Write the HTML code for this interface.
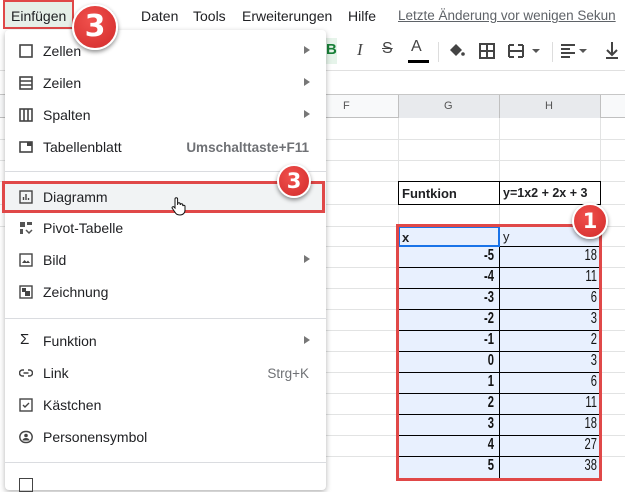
<!DOCTYPE html>
<html><head><meta charset="utf-8"><style>
*{margin:0;padding:0;box-sizing:border-box}
body{width:625px;height:481px;overflow:hidden;background:#fff;font-family:"Liberation Sans",Arial,sans-serif;position:relative;color:#202124}
.abs{position:absolute}
.menubar span{position:absolute;top:8px;font-size:14px;color:#202124}
.hl{position:absolute;height:1px;background:#e2e3e3}
.vl{position:absolute;width:1px;background:#e2e3e3}
.cell{position:absolute;font-size:16px;font-weight:bold;transform:scaleX(.7);transform-origin:right center;color:#111}
.menu{position:absolute;left:5px;top:30px;width:321px;height:460px;background:#fff;box-shadow:0 2px 6px rgba(0,0,0,.3);border-radius:4px}
.it{position:absolute;left:0;width:321px;height:32px;font-size:14px}
.it .t{position:absolute;left:38px;top:8px}
.it .ic{position:absolute;left:14px;top:9px;width:14px;height:14px}
.it .ar{position:absolute;right:16px;top:11px;width:0;height:0;border-left:6px solid #777;border-top:4px solid transparent;border-bottom:4px solid transparent}
.it .sc{position:absolute;right:17px;top:9px;color:#6f7175;font-weight:bold;font-size:13.5px}
.sep{position:absolute;left:0;width:321px;height:1px;background:#dadce0}
.badge{position:absolute;border-radius:50%;background:radial-gradient(circle at 40% 35%,#f0504c,#d22b2b);border:2px solid #fff;box-shadow:0 2px 4px rgba(0,0,0,.45);color:#fff;font-weight:bold;text-align:center;font-family:"DejaVu Sans",sans-serif}
</style></head><body>
<div class="abs" style="left:3px;top:0;width:71px;height:29px;border:2px solid #e04848;background:#e6efe8"></div>
<div class="menubar">
<span style="left:11px">Einfügen</span>
<span style="left:110px">t</span>
<span style="left:141px">Daten</span>
<span style="left:193px">Tools</span>
<span style="left:242px">Erweiterungen</span>
<span style="left:348px">Hilfe</span>
<span style="left:398px;color:#5f6368;text-decoration:underline;font-size:13.5px">Letzte Änderung vor wenigen Sekun</span>
</div>
<div class="abs" style="left:0;top:32px;width:625px;height:39px;background:#fff;border-bottom:1px solid #e0e0e0"></div>
<div class="abs" style="left:326px;top:38px;width:11px;height:26px;background:#e6f4ea"></div>
<div class="abs" style="left:326px;top:41px;font-weight:bold;color:#188038;font-size:15px">B</div>
<div class="abs" style="left:357px;top:40px;font-style:italic;font-family:'Liberation Serif';font-size:17px;color:#444">I</div>
<div class="abs" style="left:382px;top:40px;text-decoration:line-through;font-size:16px;color:#444">S</div>
<div class="abs" style="left:411px;top:38px;font-size:16px;color:#444">A</div>
<div class="abs" style="left:408px;top:60px;width:21px;height:3px;background:#000"></div>
<div class="abs" style="left:438px;top:42px;width:1px;height:20px;background:#ddd"></div>
<svg class="abs" style="left:448px;top:42px" width="18" height="18"><path d="M2 8l6-6 6 6-6 6z" fill="#444"/><circle cx="15" cy="12" r="1.8" fill="#444"/></svg>
<svg class="abs" style="left:479px;top:43px" width="16" height="16"><rect x="1" y="1" width="14" height="14" fill="none" stroke="#444" stroke-width="2"/><path d="M8 1V15M1 8H15" stroke="#444" stroke-width="2"/></svg>
<svg class="abs" style="left:508px;top:43px" width="40" height="16"><path d="M1 2h5M10 2h5M1 14h5M10 14h5M1 8h14M1 2v12M15 2v12" stroke="#444" stroke-width="2" fill="none"/><path d="M24 6l4 4 4-4z" fill="#555"/></svg>
<div class="abs" style="left:552px;top:42px;width:1px;height:20px;background:#ddd"></div>
<svg class="abs" style="left:561px;top:44px" width="40" height="14"><path d="M0 1h14M0 5h9M0 9h14M0 13h9" stroke="#444" stroke-width="2"/><path d="M18 5l4 4 4-4z" fill="#555"/></svg>
<svg class="abs" style="left:606px;top:42px" width="14" height="18"><path d="M6 0v12M1 8l5 5 5-5M0 16h12" stroke="#444" stroke-width="2" fill="none"/></svg>
<div class="hl" style="left:0;top:94px;width:625px;background:#c7c7c7"></div>
<div class="abs" style="left:0;top:95px;width:625px;height:23px;background:#f8f9fa;border-bottom:1px solid #c0c0c0"></div>
<div class="abs" style="left:398px;top:95px;width:202px;height:23px;background:#e8eaed"></div>
<div class="abs" style="left:343px;top:100px;font-size:11px;color:#555">F</div>
<div class="abs" style="left:444px;top:100px;font-size:11px;color:#555">G</div>
<div class="abs" style="left:545px;top:100px;font-size:11px;color:#555">H</div>
<div class="vl" style="left:398px;top:95px;height:23px;background:#c0c0c0"></div>
<div class="vl" style="left:499px;top:95px;height:23px;background:#c0c0c0"></div>
<div class="vl" style="left:600px;top:95px;height:23px;background:#c0c0c0"></div>
<div class="vl" style="left:398px;top:118px;height:363px"></div>
<div class="vl" style="left:499px;top:118px;height:363px"></div>
<div class="vl" style="left:600px;top:118px;height:363px"></div>
<div class="hl" style="left:0;top:139px;width:625px"></div>
<div class="hl" style="left:0;top:160px;width:625px"></div>
<div class="hl" style="left:0;top:181px;width:625px"></div>
<div class="hl" style="left:0;top:204px;width:625px"></div>
<div class="hl" style="left:0;top:226px;width:625px"></div>
<div id="g"></div>
<div class="abs" style="left:398px;top:181px;width:203px;height:24px;border:1px solid #000"></div>
<div class="vl" style="left:499px;top:181px;height:24px;background:#000"></div>
<div class="abs" style="left:402px;top:186px;font-size:13px;font-weight:bold">Funtkion</div>
<div class="abs" style="left:503px;top:186px;font-size:12.5px;font-weight:bold">y=1x2 + 2x + 3</div>
<div class="abs" style="left:398px;top:226px;width:202px;height:252px;background:#e8f0fe"></div>
<div id="rows"></div>
<div class="abs" style="left:398px;top:226px;width:102px;height:21px;border:2px solid #1a73e8"></div>
<div class="abs" style="left:402px;top:230px;font-size:13px;font-weight:bold">x</div>
<div class="abs" style="left:503px;top:229px;font-size:13px">y</div>
<div class="abs" style="left:396px;top:224px;width:206px;height:257px;border:3px solid #e04848"></div>
<div class="menu">
<div class="it" style="top:5px"><svg class="ic" viewBox="0 0 14 14"><rect x="1" y="1" width="12" height="12" fill="none" stroke="#444" stroke-width="1.6"/></svg><span class="t">Zellen</span><i class="ar"></i></div>
<div class="it" style="top:37px"><svg class="ic" viewBox="0 0 14 14"><rect x="1" y="1" width="12" height="12" fill="none" stroke="#444" stroke-width="1.6"/><path d="M1 5h12M1 9h12" stroke="#444" stroke-width="1.6"/></svg><span class="t">Zeilen</span><i class="ar"></i></div>
<div class="it" style="top:69px"><svg class="ic" viewBox="0 0 14 14"><rect x="1" y="1" width="12" height="12" fill="none" stroke="#444" stroke-width="1.6"/><path d="M5 1v12M9 1v12" stroke="#444" stroke-width="1.6"/></svg><span class="t">Spalten</span><i class="ar"></i></div>
<div class="it" style="top:101px"><svg class="ic" viewBox="0 0 14 14"><rect x="1" y="2" width="12" height="10" fill="none" stroke="#444" stroke-width="1.6"/><rect x="8" y="2" width="5" height="4" fill="#444"/></svg><span class="t">Tabellenblatt</span><span class="sc">Umschalttaste+F11</span></div>
<div class="sep" style="top:141px"></div>
<div class="it" style="top:151px;background:#f1f3f4"><svg class="ic" viewBox="0 0 14 14"><rect x="1" y="1" width="12" height="12" fill="none" stroke="#444" stroke-width="1.4"/><path d="M4.5 10V7M7 10V4M9.5 10V8" stroke="#444" stroke-width="1.4"/></svg><span class="t">Diagramm</span></div>
<div class="it" style="top:182px"><svg class="ic" viewBox="0 0 14 14"><path d="M1 1h5v5H1zM8 1h5v3H8zM1 8h3v5H1z" fill="#555"/><path d="M7 9l3 3 3-3" stroke="#555" stroke-width="1.5" fill="none"/></svg><span class="t">Pivot-Tabelle</span></div>
<div class="it" style="top:214px"><svg class="ic" viewBox="0 0 14 14"><rect x="1" y="1" width="12" height="12" fill="none" stroke="#444" stroke-width="1.4"/><path d="M3 10l2.5-3 2 2 1.5-1.5L11 10z" fill="#444"/></svg><span class="t">Bild</span><i class="ar"></i></div>
<div class="it" style="top:246px"><svg class="ic" viewBox="0 0 14 14"><rect x="1" y="1" width="12" height="12" fill="none" stroke="#444" stroke-width="1.4"/><rect x="3" y="3" width="4" height="4" fill="#444"/><rect x="6" y="6" width="5" height="5" fill="#444"/></svg><span class="t">Zeichnung</span></div>
<div class="sep" style="top:288px"></div>
<div class="it" style="top:295px"><span class="ic" style="font-size:15px;top:6px;left:15px">Σ</span><span class="t">Funktion</span><i class="ar"></i></div>
<div class="it" style="top:327px"><svg class="ic" viewBox="0 0 14 14"><path d="M5 4H3.5a3 3 0 000 6H5M9 4h1.5a3 3 0 010 6H9M4.5 7h5" stroke="#444" stroke-width="1.5" fill="none"/></svg><span class="t">Link</span><span class="sc" style="font-weight:normal">Strg+K</span></div>
<div class="it" style="top:359px"><svg class="ic" viewBox="0 0 14 14"><rect x="1" y="1" width="12" height="12" fill="none" stroke="#444" stroke-width="1.4"/><path d="M4 7l2 2 4-4" stroke="#444" stroke-width="1.4" fill="none"/></svg><span class="t">Kästchen</span></div>
<div class="it" style="top:391px"><svg class="ic" viewBox="0 0 14 14"><rect x="0.8" y="1.5" width="12.4" height="11" rx="5.5" fill="none" stroke="#444" stroke-width="1.4"/><circle cx="7" cy="5.5" r="1.8" fill="#444"/><path d="M3.5 10.5a3.5 2.5 0 017 0z" fill="#444"/></svg><span class="t">Personensymbol</span></div>
<div class="sep" style="top:432px"></div>
<div class="abs" style="left:14px;top:448px;width:14px;height:14px;border:1.5px solid #444"></div>
</div>
<div class="abs" style="left:2px;top:181px;width:323px;height:32px;border:3px solid #e04848"></div>
<svg class="abs" style="left:170px;top:196px" width="16" height="20"><path d="M5 12V3a1.3 1.3 0 012.6 0v6 -1a1.3 1.3 0 012.6 0v1a1.3 1.3 0 012.6 0v1a1.2 1.2 0 012.2 0v4c0 3-2 5-5 5s-4-1-5.5-3.5L2 12a1.2 1.2 0 012-1z" fill="#fff" stroke="#111" stroke-width="1"/></svg>
<div class="badge" style="left:72px;top:4px;width:46px;height:46px;font-size:30px;line-height:42px">3</div>
<div class="badge" style="left:277px;top:164px;width:34px;height:34px;font-size:21px;line-height:30px">3</div>
<div class="badge" style="left:572px;top:203px;width:36px;height:36px;font-size:21px;line-height:32px">1</div>
<script>
var xs=[-5,-4,-3,-2,-1,0,1,2,3,4,5],h='',g='';
for(var i=0;i<11;i++){var t=246+i*21;
g+='<div class="hl" style="left:326px;top:'+t+'px;width:72px"></div><div class="hl" style="left:600px;top:'+t+'px;width:25px"></div>';
h+='<div class="abs" style="left:398px;top:'+t+'px;width:202px;height:1px;background:#000"></div>';
h+='<div class="cell" style="left:398px;width:96px;text-align:right;top:'+(t+1)+'px">'+xs[i]+'</div>';
h+='<div class="cell" style="left:499px;width:98px;text-align:right;font-weight:normal;top:'+(t+1)+'px">'+(xs[i]*xs[i]+2*xs[i]+3)+'</div>';}
h+='<div class="abs" style="left:499px;top:226px;width:1px;height:252px;background:#000"></div>';
document.getElementById('rows').innerHTML=h;document.getElementById('g').innerHTML=g;
</script>
</body></html>
